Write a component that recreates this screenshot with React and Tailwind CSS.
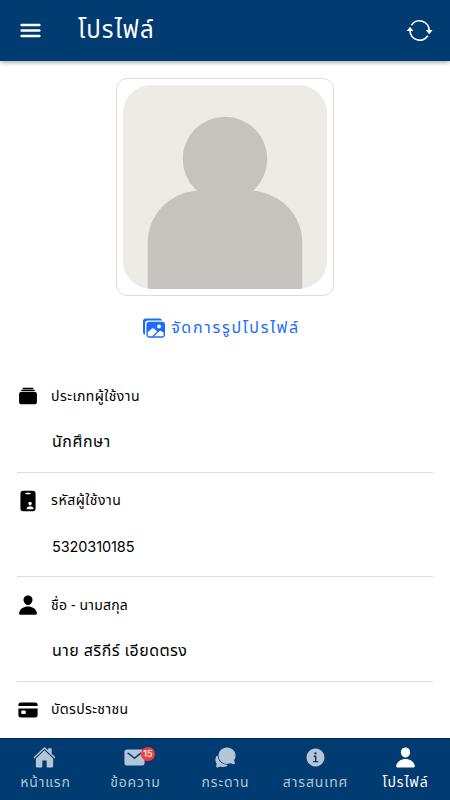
import React, { useState } from "react";
import {
  IoAlbums,
  IoCard,
  IoChatbubbles,
  IoHome,
  IoIdCard,
  IoImages,
  IoInformationCircle,
  IoMail,
  IoMenu,
  IoPerson,
} from "react-icons/io5";

const fields = [
  {
    icon: IoAlbums,
    label: "ประเภทผู้ใช้งาน",
    value: "นักศึกษา",
    labelStyle: "tracking-[0.45px]",
    valueStyle: "text-[16px] tracking-[0.5px]",
  },
  {
    icon: IoIdCard,
    label: "รหัสผู้ใช้งาน",
    value: "5320310185",
    labelStyle: "tracking-[0.55px]",
    valueStyle: "font-['Inter'] text-[14.5px] tracking-[-0.1px]",
  },
  {
    icon: IoPerson,
    label: "ชื่อ - นามสกุล",
    value: "นาย สริกีร์ เอียดตรง",
    labelStyle: "tracking-[0.2px]",
    valueStyle: "text-[16px] tracking-[0.45px]",
  },
  {
    icon: IoCard,
    label: "บัตรประชาชน",
    value: "",
    labelStyle: "tracking-[0.35px]",
    valueStyle: "",
  },
];

const tabs = [
  { id: "home", icon: IoHome, label: "หน้าแรก", iconStyle: "mr-px" },
  { id: "messages", icon: IoMail, label: "ข้อความ", iconStyle: "mr-px", badge: 15 },
  { id: "board", icon: IoChatbubbles, label: "กระดาน", iconStyle: "" },
  { id: "info", icon: IoInformationCircle, label: "สารสนเทศ", iconStyle: "" },
  { id: "profile", icon: IoPerson, label: "โปรไฟล์", iconStyle: "ml-px" },
];

const SyncIcon = () => (
  <svg viewBox="0 0 27 27" className="h-[27px] w-[27px]" fill="none">
    <path
      d="M5.400 8.200A9.700 9.700 0 0 1 23.200 13.500M21.800 18.800A9.700 9.700 0 0 1 4 13.500"
      stroke="currentColor"
      strokeWidth="1.7"
    />
    <path d="M4 9.800l3.400 4.200H.600zM23.200 17.200l-3.400-4.200h6.800z" fill="currentColor" />
  </svg>
);

const Header = () => (
  <header className="relative z-10 flex h-[61px] shrink-0 items-center bg-[#003b71] px-[17px] text-white shadow-[0_1px_5px_rgba(0,0,0,0.4)]">
    <button aria-label="menu">
      <IoMenu className="h-[27px] w-[27px]" />
    </button>
    <h1 className="ml-[34px] flex-1 text-[24px] leading-[30px] tracking-[1.1px] whitespace-nowrap">
      โปรไฟล์
    </h1>
    <button aria-label="refresh">
      <SyncIcon />
    </button>
  </header>
);

const Avatar = () => (
  <div className="h-[218px] w-[218px] rounded-[11px] border border-[#dcdcdc] p-[6px]">
    <svg viewBox="0 0 204 204" className="h-[204px] w-[204px] rounded-[28px]">
      <rect width="204" height="204" fill="#eeebe6" />
      <circle cx="102" cy="74" r="42.3" fill="#c6c3be" />
      <path
        d="M24.700 204v-46c0-28 21-50 50-52.500h54.600c29 2.500 50 24.500 50 52.500v46z"
        fill="#c6c3be"
      />
    </svg>
  </div>
);

const Field = ({ icon: Icon, label, value, labelStyle, valueStyle }) => (
  <div className="mx-[17px] h-[104.5px] shrink-0 border-b border-[#dedede] pt-[18px]">
    <div className="flex h-5 items-center">
      <Icon className="h-[22px] w-[22px] shrink-0" />
      <span className={`ml-[12px] text-[14px] whitespace-nowrap ${labelStyle}`}>
        {label}
      </span>
    </div>
    <p className={`mt-[26px] ml-[35px] h-5 leading-5 whitespace-nowrap ${valueStyle}`}>
      {value}
    </p>
  </div>
);

const App = () => {
  const [activeTab, setActiveTab] = useState("profile");

  return (
    <main className="flex h-screen flex-col overflow-hidden bg-white font-['Noto_Sans_Thai','Noto_Sans',sans-serif] text-black">
      <Header />

      <section className="flex min-h-0 flex-1 flex-col overflow-hidden">
        <div className="flex h-[307px] shrink-0 flex-col items-center pt-[17px]">
          <Avatar />
          <button className="mt-[20px] flex h-6 items-center pr-[7px] text-[#1c6dfd]">
            <IoImages className="h-[22px] w-[22px]" />
            <span className="ml-[6px] text-[16px] tracking-[1.7px] whitespace-nowrap">
              จัดการรูปโปรไฟล์
            </span>
          </button>
        </div>

        {fields.map((field) => (
          <Field key={field.label} {...field} />
        ))}
      </section>

      {/* bottom tabs */}
      <nav className="grid h-[62px] shrink-0 grid-cols-5 border-t border-[#002b5c] bg-[#003b71]">
        {tabs.map(({ id, icon: Icon, label, iconStyle, badge }) => (
          <button
            key={id}
            onClick={() => setActiveTab(id)}
            className={`flex flex-col items-center pt-[7px] ${
              activeTab === id ? "text-white" : "text-[#b3c5d6]"
            }`}
          >
            <span className={`relative ${iconStyle}`}>
              <Icon className="h-[23px] w-[23px]" />
              {badge && (
                <span className="absolute top-[1px] left-[18px] flex h-[14px] w-[14px] items-center justify-center rounded-full bg-[#f53d3d] font-['Inter'] text-[9px] font-medium text-white">
                  {badge}
                </span>
              )}
            </span>
            <span className="mt-[4px] ml-px text-[14px] leading-5 tracking-[0.85px] whitespace-nowrap">
              {label}
            </span>
          </button>
        ))}
      </nav>
    </main>
  );
};

export default App;
